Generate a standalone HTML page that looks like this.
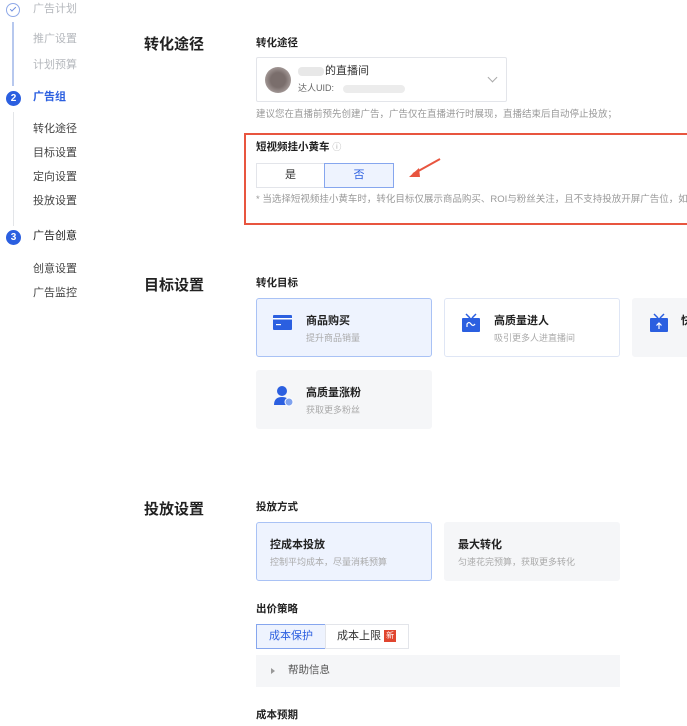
<!DOCTYPE html>
<html><head><meta charset="utf-8"><style>
*{margin:0;padding:0;box-sizing:border-box}
body{width:687px;height:726px;background:#fff;position:relative;overflow:hidden;font-family:"Liberation Sans","Noto Sans CJK SC",sans-serif;color:#333}
.a{position:absolute;white-space:nowrap;line-height:1}
.nav{font-size:11px;color:#444}
.navg{font-size:11px;color:#b5b8bd}
.h{font-size:15px;font-weight:bold;color:#222}
.lb{font-size:10.5px;font-weight:bold;color:#222}
.hint{font-size:9px;color:#999}
.card{position:absolute;border-radius:3px;background:#f5f6f8;border:1px solid #f5f6f8}
.sel{background:#eef3fe;border:1px solid #a9c2f5}
.wh{background:#fff;border:1px solid #dfe6f5}
.ct{font-size:11px;font-weight:bold;color:#222}
.cs{font-size:9px;color:#aaa}
.circ{position:absolute;width:15px;height:15px;border-radius:50%;background:#2b5fe0;color:#fff;font-size:10px;font-weight:bold;text-align:center;line-height:15px}
</style></head><body>
<!-- sidebar -->
<div class="a" style="left:6px;top:3px;width:14px;height:14px;border:1.5px solid #8fa9e8;border-radius:50%"></div>
<div class="a" style="left:10px;top:7px;width:6px;height:3px;border-left:1.5px solid #6e8fe0;border-bottom:1.5px solid #6e8fe0;transform:rotate(-45deg)"></div>
<div class="a navg" style="left:33px;top:4px">广告计划</div>
<div class="a navg" style="left:33px;top:34px">推广设置</div>
<div class="a navg" style="left:33px;top:60px">计划预算</div>
<div class="a" style="left:12px;top:22px;width:2px;height:64px;background:#b7c8ee"></div>
<div class="circ" style="left:6px;top:91px">2</div>
<div class="a" style="left:33px;top:92px;font-size:11px;font-weight:bold;color:#2b5fe0">广告组</div>
<div class="a" style="left:12.5px;top:112px;width:1px;height:114px;background:#e3e5e8"></div>
<div class="a nav" style="left:33px;top:124px">转化途径</div>
<div class="a nav" style="left:33px;top:148px">目标设置</div>
<div class="a nav" style="left:33px;top:172px">定向设置</div>
<div class="a nav" style="left:33px;top:196px">投放设置</div>
<div class="circ" style="left:6px;top:230px">3</div>
<div class="a" style="left:33px;top:231px;font-size:11px;color:#222">广告创意</div>
<div class="a nav" style="left:33px;top:264px">创意设置</div>
<div class="a nav" style="left:33px;top:288px">广告监控</div>
<!-- section titles -->
<div class="a h" style="left:144px;top:37px">转化途径</div>
<div class="a h" style="left:144px;top:278px">目标设置</div>
<div class="a h" style="left:144px;top:502px">投放设置</div>
<!-- route -->
<div class="a lb" style="left:256px;top:38px">转化途径</div>
<div class="a" style="left:256px;top:57px;width:251px;height:45px;border:1px solid #e3e5ea;border-radius:2px"></div>
<div class="a" style="left:265px;top:67px;width:26px;height:26px;border-radius:50%;background:radial-gradient(circle,#7a6e6c 40%,#c8bfbd 100%)"></div>
<div class="a" style="left:298px;top:67px;width:26px;height:9px;background:#e8e8e8;border-radius:4px"></div>
<div class="a" style="left:325px;top:66px;font-size:11px;color:#333">的直播间</div>
<div class="a" style="left:298px;top:84px;font-size:9px;color:#666">达人UID:</div>
<div class="a" style="left:343px;top:85px;width:62px;height:8px;background:#ececec;border-radius:4px"></div>
<div class="a" style="left:489px;top:74px;width:7px;height:7px;border-right:1px solid #aaa;border-bottom:1px solid #aaa;transform:rotate(45deg)"></div>
<div class="a hint" style="left:256px;top:110px;font-size:9.5px">建议您在直播前预先创建广告，广告仅在直播进行时展现，直播结束后自动停止投放；</div>
<div class="a" style="left:244px;top:133px;width:450px;height:92px;border:2px solid #e8553f"></div>
<div class="a lb" style="left:256px;top:142px">短视频挂小黄车 <span style="font-weight:normal;color:#aaa;font-size:9px">ⓘ</span></div>
<div class="a" style="left:256px;top:163px;width:69px;height:25px;border:1px solid #e3e5ea;font-size:11px;text-align:center;line-height:23px;color:#333">是</div>
<div class="a" style="left:324px;top:163px;width:70px;height:25px;border:1px solid #86a6ee;background:#eef3fe;font-size:11px;text-align:center;line-height:23px;color:#2b5fe0">否</div>
<svg class="a" style="left:405px;top:155px" width="40" height="26"><line x1="35" y1="4" x2="8" y2="19" stroke="#e8553f" stroke-width="2"/><path d="M4 22 L14 13 L15 22 Z" fill="#e8553f"/></svg>
<div class="a hint" style="left:256px;top:195px;font-size:9.5px">* 当选择短视频挂小黄车时，转化目标仅展示商品购买、ROI与粉丝关注，且不支持投放开屏广告位，如果</div>
<!-- goals -->
<div class="a lb" style="left:256px;top:278px">转化目标</div>
<div class="card sel" style="left:256px;top:298px;width:176px;height:59px"></div>
<div class="card wh" style="left:444px;top:298px;width:176px;height:59px"></div>
<div class="card" style="left:632px;top:298px;width:80px;height:59px"></div>
<div class="card" style="left:256px;top:370px;width:176px;height:59px"></div>
<svg class="a" style="left:273px;top:315px" width="20" height="16"><rect x="0" y="0" width="19" height="15" rx="1" fill="#2b5fe0"/><rect x="0" y="3" width="19" height="1.5" fill="#fff"/><rect x="3" y="9" width="5" height="1.2" fill="#fff"/></svg>
<div class="a ct" style="left:306px;top:316px">商品购买</div>
<div class="a cs" style="left:306px;top:334px">提升商品销量</div>
<svg class="a" style="left:461px;top:313px" width="20" height="20"><path d="M5 1 L9 5 M15 1 L11 5" stroke="#2b5fe0" stroke-width="1.5"/><rect x="1" y="5" width="18" height="14" rx="1" fill="#2b5fe0"/><path d="M6 14 L6 11 Q8 8 10 11 Q12 14 14 11" stroke="#fff" fill="none" stroke-width="1.2"/></svg>
<div class="a ct" style="left:494px;top:316px">高质量进人</div>
<div class="a cs" style="left:494px;top:334px">吸引更多人进直播间</div>
<svg class="a" style="left:649px;top:313px" width="20" height="20"><path d="M5 1 L9 5 M15 1 L11 5" stroke="#2b5fe0" stroke-width="1.5"/><rect x="1" y="5" width="18" height="14" rx="1" fill="#2b5fe0"/><path d="M10 16 V10 M7.5 12.5 L10 10 L12.5 12.5" stroke="#fff" fill="none" stroke-width="1.2"/></svg>
<div class="a ct" style="left:681px;top:316px">快</div>
<svg class="a" style="left:273px;top:385px" width="22" height="22"><circle cx="9" cy="6" r="5" fill="#2b5fe0"/><path d="M1 20 Q1 12 9 12 Q17 12 17 20 Z" fill="#2b5fe0"/><circle cx="16" cy="17" r="4" fill="#7fa2ef" stroke="#fff"/></svg>
<div class="a ct" style="left:306px;top:388px">高质量涨粉</div>
<div class="a cs" style="left:306px;top:406px">获取更多粉丝</div>
<!-- delivery -->
<div class="a lb" style="left:256px;top:502px">投放方式</div>
<div class="card sel" style="left:256px;top:522px;width:176px;height:59px"></div>
<div class="card" style="left:444px;top:522px;width:176px;height:59px"></div>
<div class="a ct" style="left:270px;top:540px">控成本投放</div>
<div class="a cs" style="left:270px;top:558px">控制平均成本，尽量消耗预算</div>
<div class="a ct" style="left:458px;top:540px">最大转化</div>
<div class="a cs" style="left:458px;top:558px">匀速花完预算，获取更多转化</div>
<div class="a lb" style="left:256px;top:604px">出价策略</div>
<div class="a" style="left:256px;top:624px;width:70px;height:25px;border:1px solid #86a6ee;background:#eef3fe;font-size:11px;text-align:center;line-height:23px;color:#2b5fe0">成本保护</div>
<div class="a" style="left:325px;top:624px;width:84px;height:25px;border:1px solid #e3e5ea;font-size:11px;line-height:23px;color:#333;padding-left:11px">成本上限 <span style="display:inline-block;width:12px;height:12px;background:#e0452f;color:#fff;font-size:8px;line-height:12px;text-align:center;vertical-align:1px">新</span></div>
<div class="a" style="left:256px;top:655px;width:364px;height:32px;background:#f5f6f8"></div>
<div class="a" style="left:271px;top:668px;width:0;height:0;border-left:4px solid #999;border-top:3px solid transparent;border-bottom:3px solid transparent"></div>
<div class="a" style="left:288px;top:665px;font-size:10.5px;color:#555">帮助信息</div>
<div class="a lb" style="left:256px;top:710px">成本预期</div>
</body></html>
